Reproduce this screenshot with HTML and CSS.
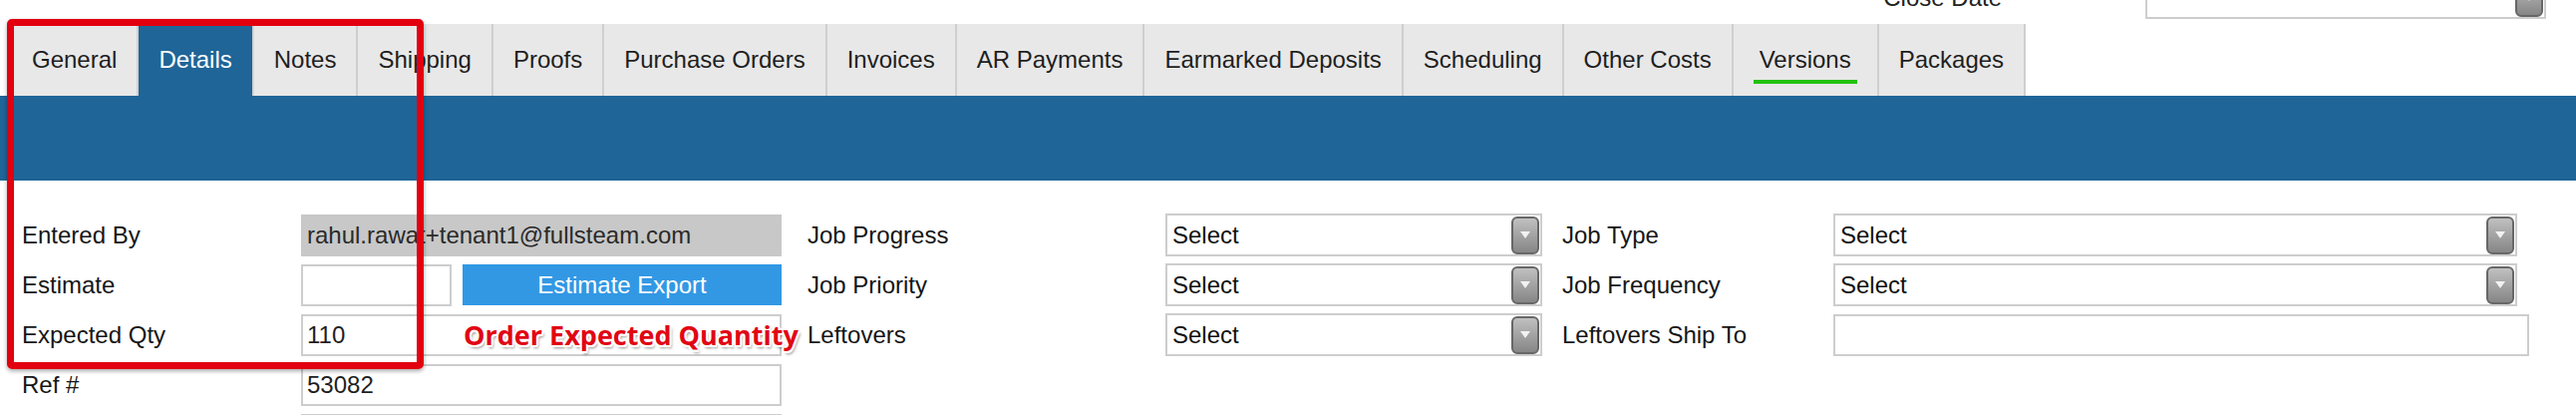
FILE: index.html
```html
<!DOCTYPE html>
<html lang="en">
<head>
  <meta charset="UTF-8">
  <title>Job Details</title>
  <link rel="stylesheet" href="styles.css">
</head>
<body>

  <!-- tail of the header fields, scrolled up -->
  <div class="head">
    <label class="head-label">Close Date</label>
    <div class="select head-select">
      <span class="select-text"></span>
      <span class="select-btn"></span>
    </div>
  </div>

  <ul class="tabs">
    <li class="tab">General</li>
    <li class="tab tab-active">Details</li>
    <li class="tab">Notes</li>
    <li class="tab">Shipping</li>
    <li class="tab">Proofs</li>
    <li class="tab">Purchase Orders</li>
    <li class="tab">Invoices</li>
    <li class="tab">AR Payments</li>
    <li class="tab">Earmarked Deposits</li>
    <li class="tab">Scheduling</li>
    <li class="tab">Other Costs</li>
    <li class="tab"><span class="tab-mark">Versions</span></li>
    <li class="tab">Packages</li>
  </ul>
  <div class="band"></div>

  <form class="details">
    <!-- row 1 -->
    <label class="lbl">Entered By</label>
    <input class="field field-locked" value="rahul.rawat+tenant1@fullsteam.com" readonly>
    <label class="lbl lbl-mid">Job Progress</label>
    <div class="select"><span class="select-text">Select</span><span class="select-btn"></span></div>
    <label class="lbl lbl-right">Job Type</label>
    <div class="select select-wide"><span class="select-text">Select</span><span class="select-btn"></span></div>

    <!-- row 2 -->
    <label class="lbl">Estimate</label>
    <div class="combo">
      <input class="field field-short" value="">
      <button type="button" class="btn-export">Estimate Export</button>
    </div>
    <label class="lbl lbl-mid">Job Priority</label>
    <div class="select"><span class="select-text">Select</span><span class="select-btn"></span></div>
    <label class="lbl lbl-right">Job Frequency</label>
    <div class="select select-wide"><span class="select-text">Select</span><span class="select-btn"></span></div>

    <!-- row 3 -->
    <label class="lbl">Expected Qty</label>
    <div class="cell">
      <input class="field" value="110">
      <span class="note">Order Expected Quantity</span>
    </div>
    <label class="lbl lbl-mid">Leftovers</label>
    <div class="select"><span class="select-text">Select</span><span class="select-btn"></span></div>
    <label class="lbl lbl-right">Leftovers Ship To</label>
    <input class="field" value="">

    <!-- row 4 -->
    <label class="lbl">Ref #</label>
    <input class="field" value="53082">
    <span class="gap-4"></span>

    <!-- row 5 -->
    <label class="lbl"></label>
    <input class="field" value="">
  </form>

  <div class="callout-box"></div>

</body>
</html>
```

FILE: styles.css
```css
html, body { margin: 0; padding: 0; }
body {
  position: relative; height: 416px; overflow: hidden;
  background: #fff; color: #1a1a1a;
  font-family: "Liberation Sans", Arial, sans-serif; font-size: 24px;
}

/* header leftovers */
.head {
  height: 24px; display: flex; justify-content: flex-end; align-items: flex-end;
  gap: 144px; padding-right: 30px;
}
.head-label { line-height: 28px; margin-bottom: 12px; color: #222; }
.head-select { width: 402px; margin-bottom: 5px; flex: none; }

/* tabs */
.tabs { display: flex; margin: 0 0 0 12px; padding: 0; list-style: none; height: 72px; }
.tab {
  display: flex; align-items: center; padding: 0 20px;
  background: #e8e8e8; border-right: 2px solid #cfcfcf; color: #1e1e1e;
  white-space: nowrap;
}
.tab-active { background: #1f6598; color: #fff; border-right-color: #d4d4d4; }
.tab-mark { padding: 10px 6px 6px; border-bottom: 4px solid #22c20c; }
.band { height: 85px; background: #1f6598; }

/* details grid */
.details {
  display: grid;
  grid-template-columns: 280px 482px 385px 378px 292px 698px;
  grid-auto-rows: 42px; row-gap: 8px;
  padding: 34px 0 0 22px;
}
.lbl { display: flex; align-items: center; white-space: nowrap; color: #161616; }
.lbl-mid { padding-left: 26px; }
.lbl-right { padding-left: 20px; }
.gap-4 { grid-column: span 4; }

.field {
  box-sizing: border-box; width: 100%; height: 42px; margin: 0;
  border: 2px solid #cdcdcd; padding: 0 4px; background: #fff;
  font: inherit; color: #1e1e1e; outline: none;
}
.field-locked { background: #c8c8c8; border-color: #c8c8c8; color: #2a2a2a; }
.field-short { width: 151px; flex: none; }

.combo { display: flex; gap: 11px; }
.btn-export {
  flex: 1; height: 41px; border: 0; margin: 0;
  background: #3298e4; color: #fff; font: inherit; cursor: pointer;
}

.cell { position: relative; }
.note {
  position: absolute; left: 163px; top: 2px; line-height: 38px; white-space: nowrap;
  font-family: "Open Sans", sans-serif; font-weight: 700; font-size: 27px; color: #e10614;
  text-shadow: -2px 0 #fff, 2px 0 #fff, 0 -2px #fff, 0 2px #fff,
    -1.5px -1.5px #fff, 1.5px 1.5px #fff, -1.5px 1.5px #fff, 1.5px -1.5px #fff,
    2px 3px 3px rgba(0, 0, 0, .45);
}

/* select with the grey stepper button */
.select {
  box-sizing: border-box; height: 43px; border: 2px solid #cdcdcd; background: #fff;
  display: flex; align-items: center; padding: 1px 1px 1px 5px; margin-top: -1px;
}
.select-wide { width: 686px; }
.select-text { flex: 1; color: #111; }
.select-btn {
  box-sizing: border-box; width: 28px; height: 38px; flex: none;
  border: 2px solid #676767; border-radius: 6px;
  background: linear-gradient(#c0c0c0, #868686);
  display: flex; align-items: center; justify-content: center;
}
.select-btn::after {
  content: ""; width: 0; height: 0;
  border-left: 5px solid transparent; border-right: 5px solid transparent;
  border-top: 7px solid #f2f2f2;
}

/* red highlight frame */
.callout-box {
  position: absolute; left: 7px; top: 19px; width: 418px; height: 351px;
  box-sizing: border-box; border: 7px solid #e3000f; border-radius: 5px;
  box-shadow: 0 2px 4px rgba(0, 0, 0, .35);
}
```
